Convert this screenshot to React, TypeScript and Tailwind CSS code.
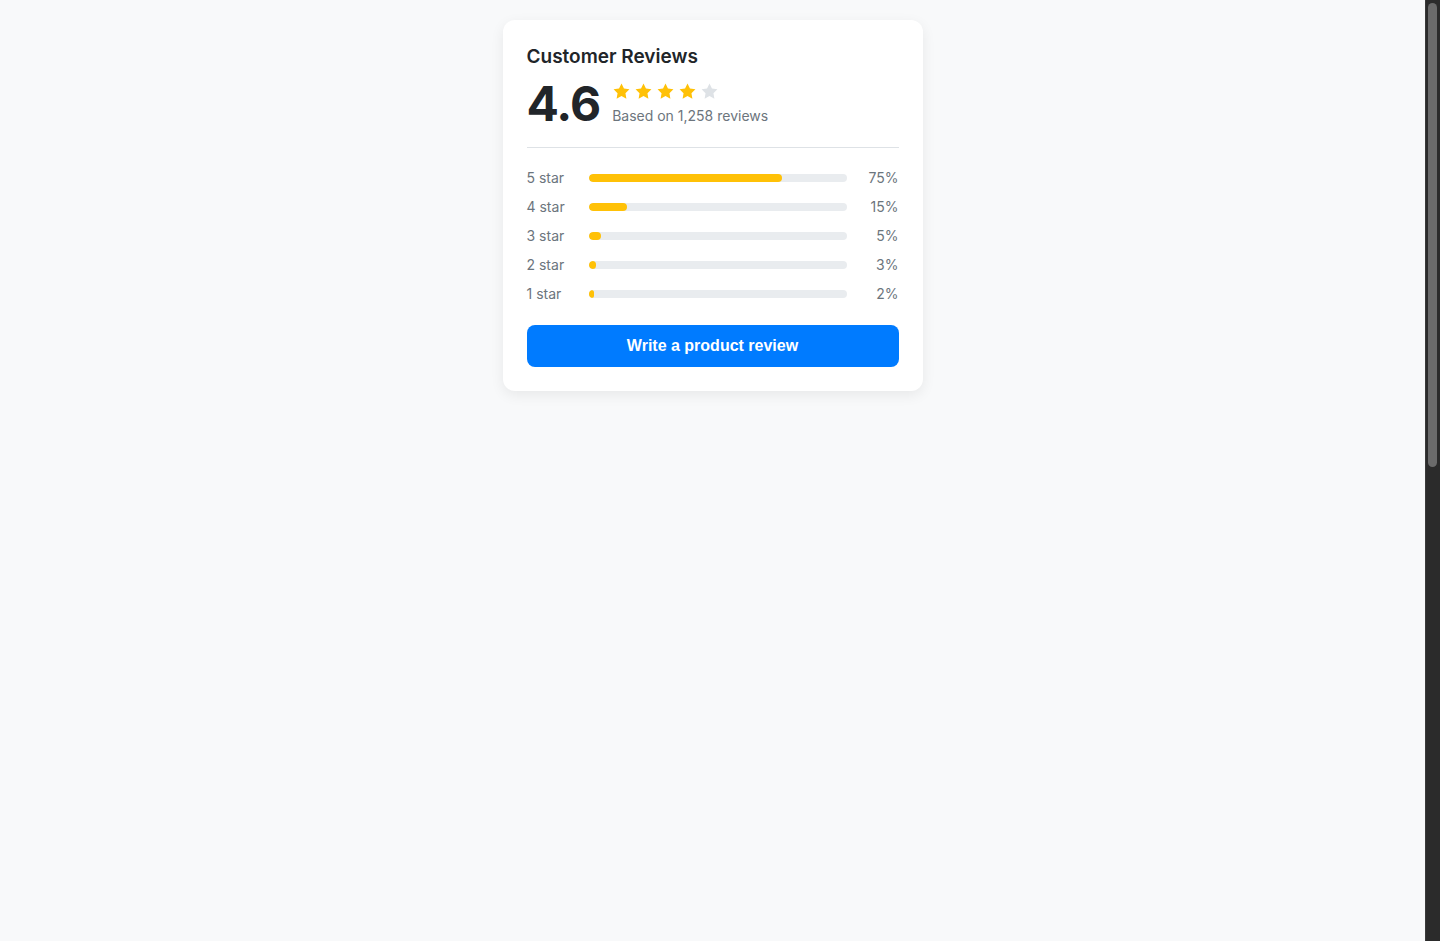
import React from 'react';

interface RatingRow {
    stars: number;
    percent: number;
}

const rows: RatingRow[] = [
    { stars: 5, percent: 75 },
    { stars: 4, percent: 15 },
    { stars: 3, percent: 5 },
    { stars: 2, percent: 3 },
    { stars: 1, percent: 2 },
];

const Star: React.FC<{ filled: boolean }> = ({ filled }) => (
    <svg width="19" height="19" viewBox="0 0 24 24" className={filled ? 'fill-[#ffc107]' : 'fill-[#dee2e6]'}>
        <path d="M12 2l3.09 6.26L22 9.27l-5 4.87 1.18 6.88L12 17.77l-6.18 3.25L7 14.14 2 9.27l6.91-1.01L12 2z" />
    </svg>
);

export default function App() {
    return (
        <div className="h-screen flex bg-[#f8f9fa] font-['Inter',sans-serif]">
            <main className="flex-1 flex justify-center pt-5">
                <div className="w-[420px] h-fit bg-white rounded-xl px-6 pt-[25px] pb-6 shadow-[0_4px_14px_rgba(0,0,0,0.07)]">
                    <h2 className="text-[19px] leading-6 font-semibold text-[#212529]">Customer Reviews</h2>

                    <div className="flex items-center gap-3 mt-[11px] pb-[19px] border-b border-[#dee2e6]">
                        <span className="text-5xl leading-none font-bold text-[#212529] tracking-[-1px]">4.6</span>
                        <div className="flex flex-col gap-[5px]">
                            <div className="flex gap-[3px]">
                                {[1, 2, 3, 4, 5].map(i => (
                                    <Star key={i} filled={i <= 4} />
                                ))}
                            </div>
                            <p className="text-sm leading-5 text-[#6c757d]">Based on 1,258 reviews</p>
                        </div>
                    </div>

                    <div className="flex flex-col gap-[9px] mt-5">
                        {rows.map(row => (
                            <div key={row.stars} className="flex items-center text-sm leading-5 text-[#6c757d]">
                                <span className="w-[62px] shrink-0">{row.stars} star</span>
                                <div className="flex-1 h-2 rounded-full bg-[#e9ecef] overflow-hidden">
                                    <div className="h-full rounded-full bg-[#ffc107]" style={{ width: `${row.percent}%` }} />
                                </div>
                                <span className="w-[52px] shrink-0 text-right">{row.percent}%</span>
                            </div>
                        ))}
                    </div>

                    <button className="mt-[21px] w-full h-[42px] rounded-lg bg-[#007bff] text-white font-bold text-base font-['Liberation_Sans',Arial,sans-serif]">
                        Write a product review
                    </button>
                </div>
            </main>

            {/* browser scrollbar */}
            <div className="w-[15px] shrink-0 bg-[#2b2b2b] border-l border-[#3a3a3a] pt-[3px] pl-[2px] pr-[3px]">
                <div className="h-[464px] rounded-full bg-[#6b6b6b]" />
            </div>
        </div>
    );
}
